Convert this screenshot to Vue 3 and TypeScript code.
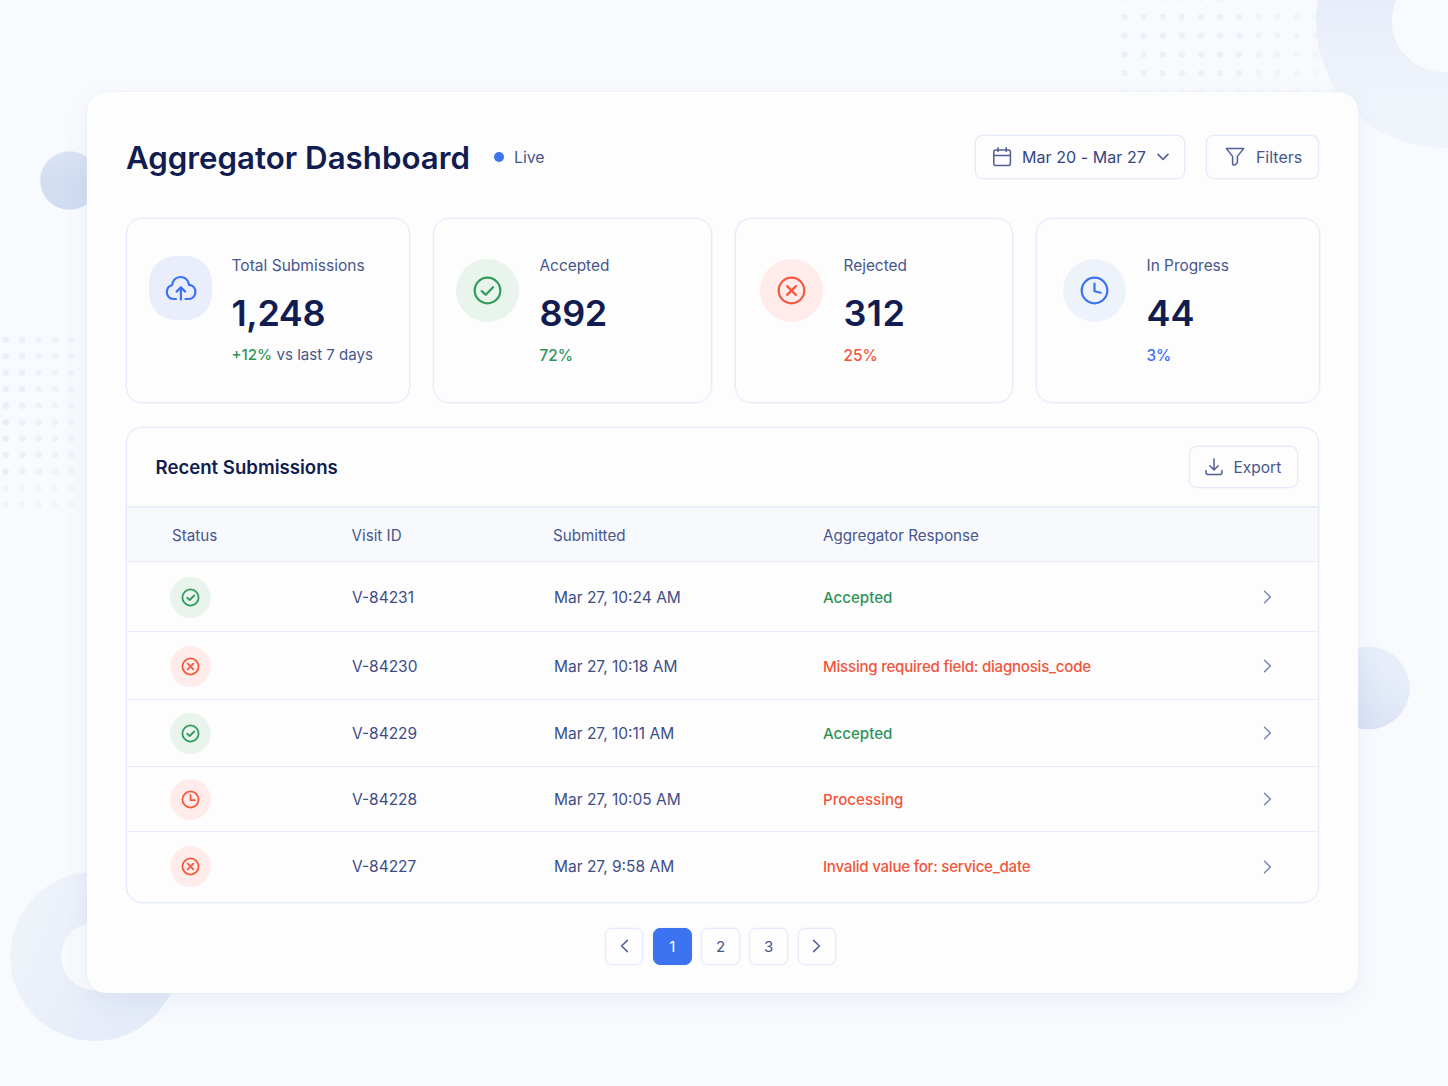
<script setup lang="ts">
type Tone = 'blue' | 'green' | 'red' | 'sky'
type Glyph = 'cloud' | 'check' | 'cross' | 'clock'

interface Stat {
  key: string
  label: string
  value: string
  delta: string
  note?: string
  tone: Tone
  glyph: Glyph
}

interface Submission {
  id: string
  submitted: string
  response: string
  tone: Tone
  glyph: Glyph
}

const stats: Stat[] = [
  { key: 'total', label: 'Total Submissions', value: '1,248', delta: '+12%', note: 'vs last 7 days', tone: 'blue', glyph: 'cloud' },
  { key: 'accepted', label: 'Accepted', value: '892', delta: '72%', tone: 'green', glyph: 'check' },
  { key: 'rejected', label: 'Rejected', value: '312', delta: '25%', tone: 'red', glyph: 'cross' },
  { key: 'progress', label: 'In Progress', value: '44', delta: '3%', tone: 'sky', glyph: 'clock' },
]

const submissions: Submission[] = [
  { id: 'V-84231', submitted: 'Mar 27, 10:24 AM', response: 'Accepted', tone: 'green', glyph: 'check' },
  { id: 'V-84230', submitted: 'Mar 27, 10:18 AM', response: 'Missing required field: diagnosis_code', tone: 'red', glyph: 'cross' },
  { id: 'V-84229', submitted: 'Mar 27, 10:11 AM', response: 'Accepted', tone: 'green', glyph: 'check' },
  { id: 'V-84228', submitted: 'Mar 27, 10:05 AM', response: 'Processing', tone: 'red', glyph: 'clock' },
  { id: 'V-84227', submitted: 'Mar 27, 9:58 AM', response: 'Invalid value for: service_date', tone: 'red', glyph: 'cross' },
]

const pages: number[] = [1, 2, 3]
const currentPage = 1

const glyphPaths: Record<'check' | 'cross' | 'clock', string> = {
  check: 'M8.2 14.6 L12.2 18.3 L19.6 10.7',
  cross: 'M9.6 9.6 L18.4 18.4 M18.4 9.6 L9.6 18.4',
  clock: 'M14 7.2 V14.8 L20.2 16.2',
}
const smallGlyphPaths: Record<'check' | 'cross' | 'clock', string> = {
  check: 'M6.2 9.8 L8.7 12 L13.2 7.5',
  cross: 'M6.7 6.7 L12.3 12.3 M12.3 6.7 L6.7 12.3',
  clock: 'M9.6 5 V10.2 H14',
}
</script>

<template>
  <div class="page">
    <svg class="backdrop" width="1448" height="1086" viewBox="0 0 1448 1086" aria-hidden="true">
      <defs>
        <linearGradient id="ringTop" x1="0" y1="0" x2="0" y2="1">
          <stop offset="0.35" stop-color="#e7edf9" />
          <stop offset="1" stop-color="#f0f4fb" />
        </linearGradient>
        <linearGradient id="ringBottom" x1="0" y1="0" x2="1" y2="0.4">
          <stop offset="0" stop-color="#eef3fa" />
          <stop offset="1" stop-color="#e5ebf8" />
        </linearGradient>
        <linearGradient id="ballRight" x1="1" y1="0" x2="0.3" y2="1">
          <stop offset="0.3" stop-color="#e7edf9" />
          <stop offset="1" stop-color="#d7e1f4" />
        </linearGradient>
        <linearGradient id="ballLeft" x1="0" y1="0" x2="0" y2="1">
          <stop offset="0" stop-color="#dbe4f5" />
          <stop offset="0.5" stop-color="#d2ddf1" />
        </linearGradient>
      </defs>
      <g fill="#e9eff9">
        <template v-for="r in 6" :key="'t' + r">
          <circle v-for="c in 12" :key="c" :cx="1105.5 + c * 19.1" :cy="-21 + r * 18.8 + 0.2" r="3.1" :opacity="r > 5 ? 0.3 : c < 8 ? 0.85 : 1.2 - c * 0.07" />
        </template>
        <template v-for="r in 11" :key="'l' + r">
          <circle v-for="c in 5" :key="c" :cx="-10.6 + c * 16.4" :cy="323.2 + r * 16.5" r="3.2" :opacity="(r > 9 ? 0.6 : 1) * (1.1 - c * 0.1)" />
        </template>
      </g>
      <circle cx="1443" cy="21" r="89" fill="none" stroke="url(#ringTop)" stroke-width="76" />
      <circle cx="94.5" cy="956.5" r="59" fill="none" stroke="url(#ringBottom)" stroke-width="51" />
      <circle cx="69.5" cy="180.5" r="29.3" fill="url(#ballLeft)" />
      <circle cx="1368.5" cy="688" r="41.3" fill="url(#ballRight)" />
    </svg>

    <main class="board">
      <header class="top">
        <h1 class="title">Aggregator Dashboard</h1>
        <span class="live"><i class="live-dot"></i>Live</span>
        <div class="tools">
          <button class="btn btn-date">
            <svg width="20" height="20" viewBox="0 0 20 20" class="line">
              <rect x="1.8" y="3" width="16.6" height="15.4" rx="1.8" />
              <path d="M1.8 8.4 H18.4 M6 0.8 V4.6 M14.2 0.8 V4.6" />
            </svg>
            <span>Mar 20 - Mar 27</span>
            <svg class="line caret" width="12" height="8" viewBox="0 0 12 8"><path d="M1 1.4 L6 6.4 L11 1.4" /></svg>
          </button>
          <button class="btn btn-filter">
            <svg width="20" height="20" viewBox="0 0 20 20" class="line">
              <path d="M1.4 1.6 H18.6 L12.4 9.4 V15.6 L10.2 17.9 Q7.6 18.6 7.6 16.4 V9.4 Z" />
            </svg>
            <span>Filters</span>
          </button>
        </div>
      </header>

      <section class="stats">
        <article v-for="s in stats" :key="s.key" class="stat" :class="'stat-' + s.key">
          <div class="badge" :class="'tone-' + s.tone">
            <svg v-if="s.glyph === 'cloud'" width="32" height="26" viewBox="0 0 32 26">
              <path d="M11 24 H8.4 C4.6 24 1.8 21.1 1.8 17.3 C1.8 13.6 4 11 7 10.2 C7.4 5.4 11 2 15.4 2 C20 2 23.2 5.2 24 9.8 C27.8 10.2 30.4 13 30.4 16.8 C30.4 21 27.6 24 23.6 24 H20.4" />
              <path d="M15.9 24.6 V13 M11.6 16.6 L15.9 12.4 L20.2 16.6" />
            </svg>
            <svg v-else width="29" height="29" viewBox="-0.5 -0.5 29 29">
              <circle cx="14" cy="14" r="12.8" />
              <path :d="glyphPaths[s.glyph]" />
            </svg>
          </div>
          <div class="stat-body">
            <div class="stat-label">{{ s.label }}</div>
            <div class="stat-value">{{ s.value }}</div>
            <div class="stat-foot"><span class="delta">{{ s.delta }}</span><span v-if="s.note" class="note">{{ s.note }}</span></div>
          </div>
        </article>
      </section>

      <section class="panel">
        <div class="panel-head">
          <h2 class="panel-title">Recent Submissions</h2>
          <button class="btn btn-export">
            <svg width="18" height="18" viewBox="0 0 18 18" class="line">
              <path d="M9 1 V11.6 M4.8 7.8 L9 12 L13.2 7.8 M1 12.4 V14.6 Q1 16.6 3 16.6 H15 Q17 16.6 17 14.6 V12.4" />
            </svg>
            <span>Export</span>
          </button>
        </div>
        <div class="row row-head">
          <span>Status</span><span>Visit ID</span><span>Submitted</span><span>Aggregator Response</span>
        </div>
        <div v-for="item in submissions" :key="item.id" class="row row-item">
          <div class="pill" :class="'tone-' + item.tone">
            <svg v-if="item.glyph !== 'cloud'" width="19" height="19" viewBox="0 0 19 19">
              <circle cx="9.5" cy="9.5" r="8.1" />
              <path :d="smallGlyphPaths[item.glyph]" />
            </svg>
          </div>
          <span class="cell">{{ item.id }}</span>
          <span class="cell">{{ item.submitted }}</span>
          <span class="response" :class="['text-' + item.tone, { tight: item.glyph === 'cross' }]">{{ item.response }}</span>
          <svg class="go" width="9" height="14" viewBox="0 0 9 14"><path d="M1.5 1.2 L7.4 7 L1.5 12.8" /></svg>
        </div>
      </section>

      <nav class="pager">
        <button class="page-btn"><svg class="line" width="9" height="14" viewBox="0 0 9 14"><path d="M7.4 1.4 L1.6 7 L7.4 12.6" /></svg></button>
        <button v-for="p in pages" :key="p" class="page-btn" :class="{ active: p === currentPage }">{{ p }}</button>
        <button class="page-btn"><svg class="line" width="9" height="14" viewBox="0 0 9 14"><path d="M1.6 1.4 L7.4 7 L1.6 12.6" /></svg></button>
      </nav>
    </main>
  </div>
</template>

<style>
body {
  margin: 0;
  background: #f8fafd;
}
</style>

<style scoped>
* {
  box-sizing: border-box;
}
.page {
  position: relative;
  width: 1448px;
  height: 1086px;
  padding: 92px 0 0 86.5px;
  overflow: hidden;
  background: #f8fafd;
  font-family: Inter, 'Liberation Sans', sans-serif;
  color: #47578b;
}
.backdrop {
  position: absolute;
  inset: 0;
}
svg {
  display: block;
  flex: none;
  fill: none;
  stroke-linecap: round;
  stroke-linejoin: round;
}
.board {
  position: relative;
  width: 1271px;
  height: 900.5px;
  padding: 43px 38px 0 39.5px;
  border-radius: 19px;
  background: #fdfdfe;
  box-shadow: 0 0 2px #e2e9f7, 0 8px 28px rgba(80, 110, 190, 0.08);
}
.top {
  display: flex;
  align-items: center;
  height: 45px;
}
.title {
  margin: 0;
  padding-top: 1px;
  font-size: 31.25px;
  line-height: 44px;
  font-weight: 600;
  color: #111c50;
  white-space: nowrap;
}
.live {
  display: flex;
  align-items: center;
  gap: 9.5px;
  margin-left: 24px;
  padding-bottom: 1px;
  font-size: 15.9px;
}
.live-dot {
  width: 10.5px;
  height: 10.5px;
  border-radius: 50%;
  background: #3c73f1;
}
.tools {
  display: flex;
  gap: 21px;
  margin-left: auto;
  margin-right: 0.6px;
  padding-bottom: 1px;
}
.btn,
.page-btn,
.stat,
.panel {
  border: 1px solid #e5ebfb;
  box-shadow: 0 0 0 0.5px #eaf0fc;
}
.btn {
  display: flex;
  align-items: center;
  padding: 0;
  border-radius: 8px;
  background: #fdfdfe;
  font: inherit;
  font-size: 16px;
  color: #47578b;
  white-space: nowrap;
}
.line {
  stroke: #4f5f93;
  stroke-width: 1.5;
}
.btn-date {
  width: 210.5px;
  height: 44px;
  padding-left: 16px;
  color: #35457f;
}
.btn-date span {
  margin-left: 10px;
  letter-spacing: 0.07px;
}
.caret {
  margin-left: 11px;
}
.btn-filter {
  width: 112.5px;
  height: 44px;
  padding-left: 17.5px;
}
.btn-filter span {
  margin-left: 11px;
}
.stats {
  display: grid;
  grid-template-columns: 284px 279px 278px 283.5px;
  column-gap: 23px;
  height: 185px;
  margin-top: 38px;
}
.stat {
  display: flex;
  align-items: flex-start;
  padding-top: 37px;
  border-radius: 16px;
}
.stat-total { padding-left: 22px; }
.stat-accepted { padding-left: 22px; }
.stat-rejected { padding-left: 24px; }
.stat-progress { padding-left: 26px; }
.badge {
  display: grid;
  place-items: center;
  flex: none;
  width: 63px;
  height: 63px;
  margin-top: 3px;
  border-radius: 50%;
}
.badge svg {
  stroke-width: 2.2;
}
.stat-total .badge {
  height: 64px;
  margin-top: 0;
  border-radius: 26px;
}
.tone-blue { background: #e9eefa; }
.tone-sky { background: #eef3fb; }
.tone-green { background: #e9f4ed; }
.tone-red { background: #ffecea; }
.tone-blue svg,
.tone-sky svg { stroke: #3b72f0; }
.tone-green svg { stroke: #329b5e; }
.tone-red svg { stroke: #f4593f; }
.stat-body {
  margin-left: 20.5px;
}
.stat-total .stat-body {
  margin-left: 19.5px;
}
.stat-label {
  height: 19px;
  font-size: 15.4px;
  line-height: 19px;
  white-space: nowrap;
}
.stat-total .stat-label {
  font-size: 15.55px;
}
.stat-value {
  margin-top: 15px;
  font-size: 36px;
  line-height: 46px;
  font-weight: 600;
  color: #111c50;
}
.stat-total .stat-value { letter-spacing: -0.4px; }
.stat-accepted .stat-value { letter-spacing: -0.4px; }
.stat-rejected .stat-value { letter-spacing: 0.4px; }
.stat-foot {
  display: flex;
  gap: 4.5px;
  margin-top: 9.5px;
  font-size: 15.3px;
  line-height: 19px;
  white-space: nowrap;
}
.stat-total .stat-foot {
  margin-top: 8.5px;
  font-size: 15.05px;
}
.delta {
  font-weight: 500;
}
.stat-total .delta,
.stat-accepted .delta,
.text-green { color: #2f945a; }
.stat-rejected .delta,
.text-red { color: #f1553b; }
.stat-progress .delta { color: #3b6ff0; }
.panel {
  width: 1193px;
  height: 476px;
  margin-top: 24px;
  border-radius: 16px;
  overflow: hidden;
}
.panel-head {
  display: flex;
  align-items: center;
  justify-content: space-between;
  height: 78px;
  padding: 0 20.5px 0 28.5px;
}
.panel-title {
  margin: 0;
  font-size: 18.6px;
  font-weight: 600;
  color: #111c50;
}
.btn-export {
  width: 108.5px;
  height: 42px;
  padding-left: 14.5px;
  font-size: 15.5px;
}
.btn-export span {
  margin-left: 11px;
  padding-top: 1px;
}
.row {
  display: grid;
  grid-template-columns: 182px 202px 269px 1fr 10px;
  align-items: center;
  padding: 0 45px 0 43px;
  border-top: 1px solid #e6ecf9;
  font-size: 15.5px;
}
.row-head {
  height: 55px;
  border-top: 2px solid #e9eef9;
  background: #f8f9fd;
  grid-template-columns: 179.5px 201.5px 270px 1fr;
  padding: 1px 0 0 45px;
  font-size: 15.2px;
}
.row-item:nth-child(3) { height: 70px; padding-top: 1px; }
.row-item:nth-child(4) { height: 68px; padding-top: 1px; }
.row-item:nth-child(5) { height: 67px; }
.row-item:nth-child(6) { height: 65px; }
.row-item:nth-child(7) { height: 71px; padding-bottom: 1px; }
.cell {
  color: #3d4d85;
}
.response {
  font-size: 15.1px;
  font-weight: 500;
}
.tight {
  letter-spacing: -0.24px;
}
.pill {
  display: grid;
  place-items: center;
  width: 41px;
  height: 41px;
  border-radius: 50%;
}
.pill svg {
  stroke-width: 1.8;
}
.go {
  stroke: #7788b0;
  stroke-width: 1.5;
}
.pager {
  display: flex;
  justify-content: center;
  gap: 9.7px;
  margin-top: 25px;
  padding-right: 4.4px;
}
.page-btn {
  display: grid;
  place-items: center;
  width: 38.5px;
  height: 36.5px;
  padding: 0;
  border-radius: 7px;
  background: #fdfdfe;
  font: inherit;
  font-size: 15px;
  color: #47578b;
}
.page-btn.active {
  border-color: #3c73f0;
  background: #3c73f0;
  color: #fff;
}
</style>
